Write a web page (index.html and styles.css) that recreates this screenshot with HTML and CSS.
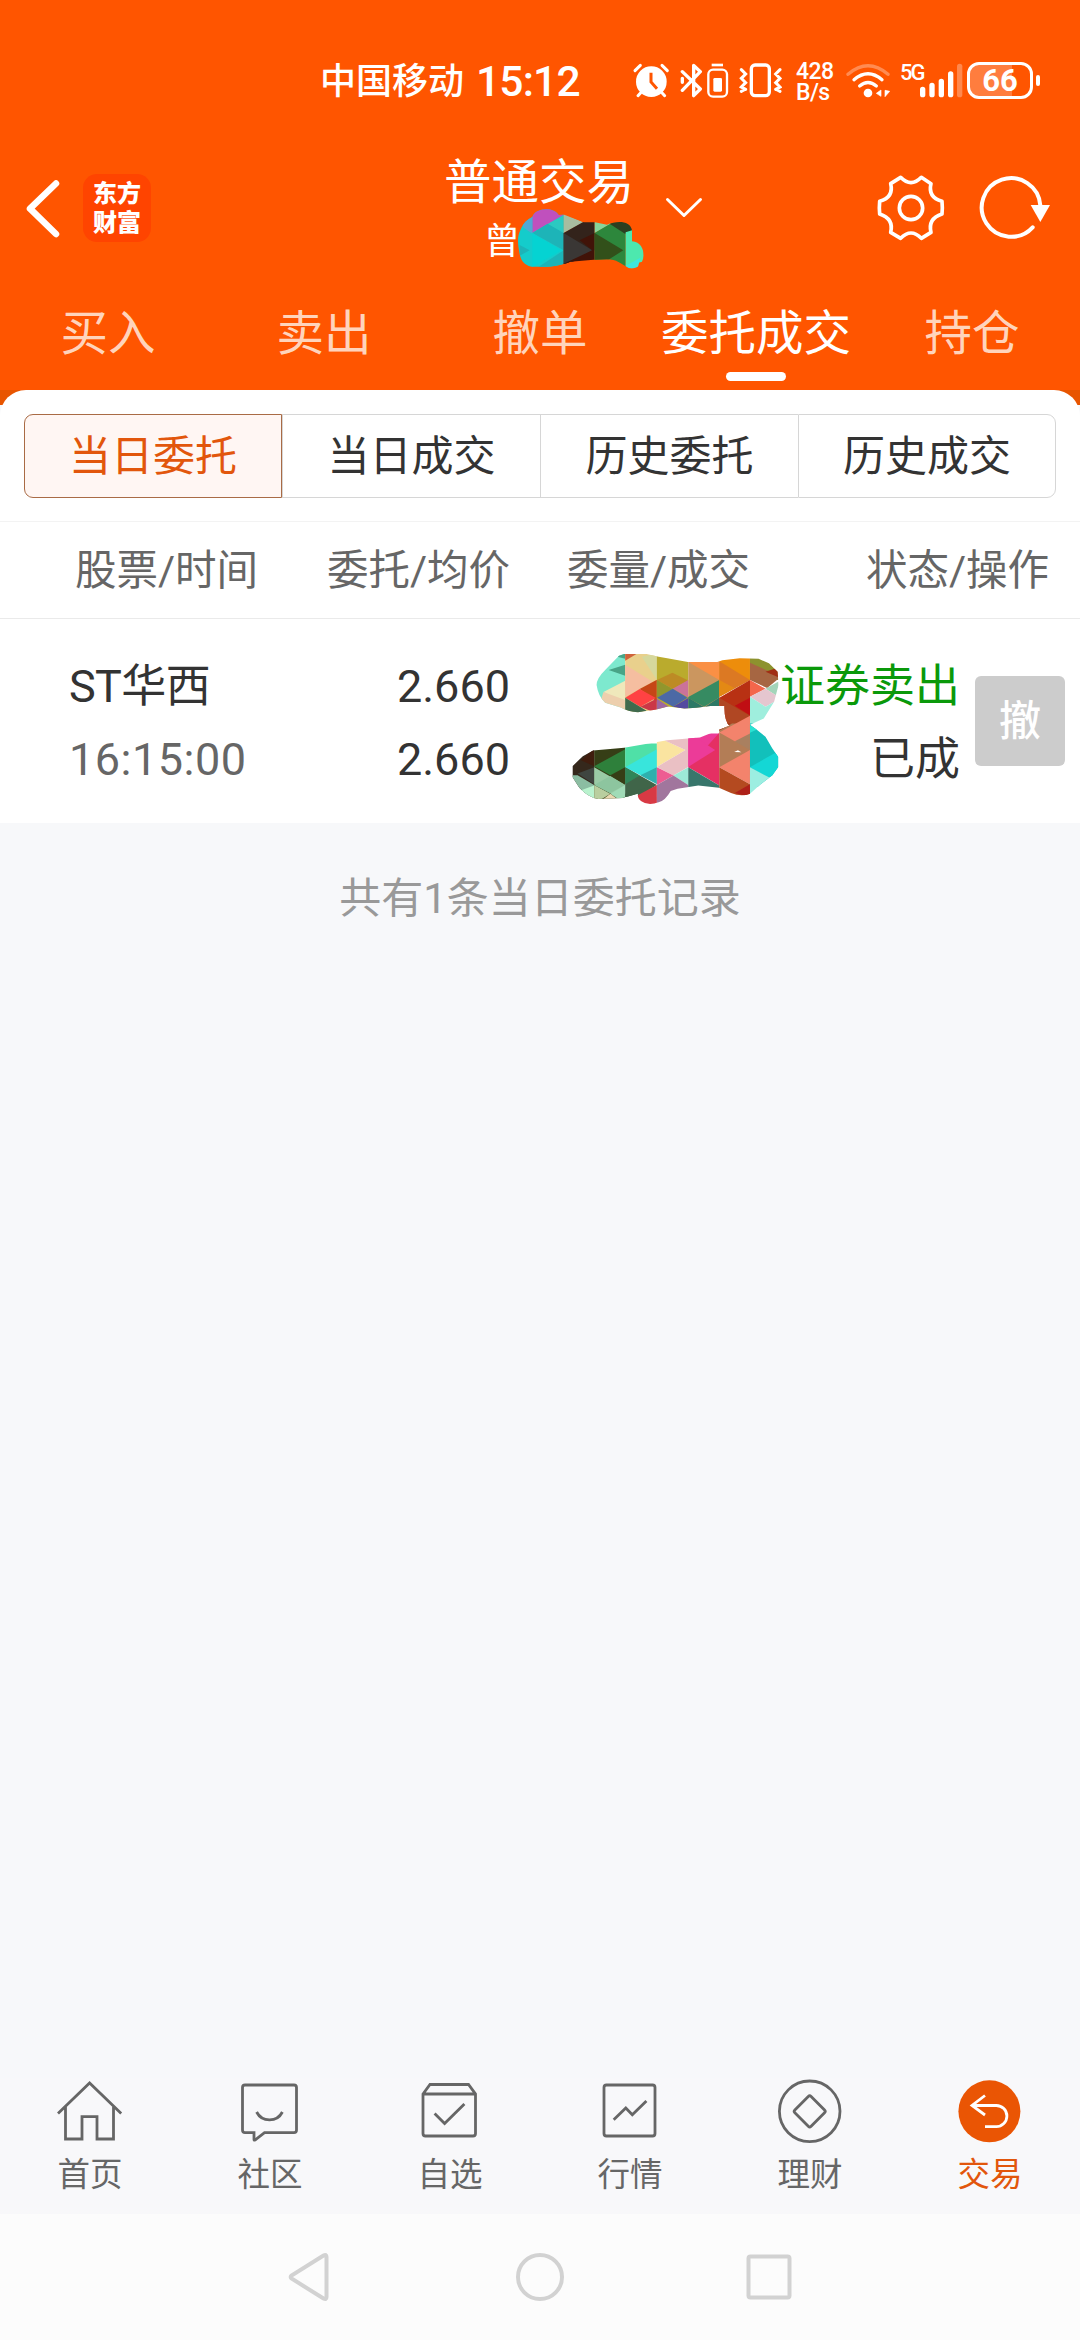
FILE: index.html
```html
<!DOCTYPE html>
<html lang="zh-CN">
<head>
<meta charset="utf-8">
<title>普通交易</title>
<link rel="stylesheet" href="styles.css">
</head>
<body>
<div class="screen">
  <header class="top">
    <div class="status">
      <span class="carrier">中国移动</span>
      <span class="clock">15:12</span>
      <svg class="st-alarm" width="38" height="38" viewBox="33 66 114 114">
        <circle cx="91" cy="125" r="46" fill="#fff"/>
        <path d="M42 92L58 76M139 92L123 76M62 155L51 167M120 155L131 167" stroke="#fff" stroke-width="9" stroke-linecap="round"/>
        <path d="M90 98V126L108 146" fill="none" stroke="#f50" stroke-width="9"/>
      </svg>
      <svg class="st-bt" width="50" height="38" viewBox="177 66 150 114">
        <path d="M184 95L238 147L218 167V76L238 95L184 151M184 115V127" fill="none" stroke="#fff" stroke-width="10" stroke-linecap="round" stroke-linejoin="round"/>
        <rect x="262" y="89" width="56" height="81" rx="14" fill="none" stroke="#fff" stroke-width="7"/>
        <path d="M272 75H306" stroke="#fff" stroke-width="8"/>
        <rect x="277" y="114" width="26" height="41" rx="4" fill="#fff"/>
      </svg>
      <svg class="st-vib" width="43" height="38" viewBox="355 66 129 114">
        <rect x="392" y="75" width="54" height="92" rx="11" fill="none" stroke="#fff" stroke-width="10"/>
        <path d="M362 89L375 102L362 115L375 128L362 141L375 148M362 154L370 150M478 89L465 102L478 115L465 128L478 141L465 148M478 154L470 150" fill="none" stroke="#fff" stroke-width="9" stroke-linecap="round"/>
      </svg>
      <span class="speed"><span>428</span><span>B/s</span></span>
      <svg class="st-wifi" width="46" height="38" viewBox="672 66 138 114">
        <path d="M681 103Q741 52 801 103" fill="none" stroke="#fff" stroke-opacity=".32" stroke-width="10" stroke-linecap="round"/>
        <path d="M699 119Q741 83 783 119M716 138Q741 117 766 138" fill="none" stroke="#fff" stroke-width="10" stroke-linecap="round"/>
        <circle cx="741" cy="159" r="13" fill="#fff"/>
        <path d="M780 150V169L766 160ZM792 151V170L806 154Z" fill="#fff" stroke="#fff" stroke-width="2"/>
      </svg>
      <span class="signal">
        <span class="net">5G</span>
        <svg width="44" height="36" viewBox="862 69 132 108">
          <path d="M873 148V164M901 136V164M929 124V164M957 102V164" stroke="#fff" stroke-width="16" stroke-linecap="round"/>
          <path d="M984 79V164" stroke="#fff" stroke-opacity=".3" stroke-width="16" stroke-linecap="round"/>
        </svg>
      </span>
      <span class="battery"><span class="cell">66</span><i></i></span>
    </div>

    <div class="titlebar">
      <svg class="back" width="36" height="60" viewBox="24 178 36 60"><path d="M56 183.500L30 208.700L56 234" fill="none" stroke="#fff" stroke-width="6.500" stroke-linecap="round" stroke-linejoin="round"/></svg>
      <div class="logo"><span>东方</span><span>财富</span></div>
      <div class="title">
        <div class="t1">普通交易</div>
        <div class="t2">曾</div>
        <svg class="mask-name" width="128" height="64" viewBox="290 200 384 192">
          <clipPath id="a"><path d="M336 230C344 202 400 198 415 224L432 223L490 246H524L560 253C590 240 630 240 635 270V303C660 305 670 325 670 346C666 380 640 388 625 383C600 370 590 357 560 357L520 358L450 364C410 380 370 380 333 379C310 374 301 358 298 340C292 310 290 290 300 270C310 245 322 238 336 230Z"/></clipPath>
          <g clip-path="url(#a)">
            <path fill="#14cccb" d="M290 200H430V392H290Z"/>
            <path fill="#c050bd" d="M336 195H430V224L336 278Z"/>
            <path fill="#51a8d3" d="M290 200H336V280L310 262Z"/>
            <path fill="#2bc9c1" d="M336 278L430 224V330Z"/>
            <path fill="#1db4b8" d="M336 278L382 250L430 278V330ZM430 330V392H336ZM298 314L328 330L298 346Z"/>
            <path fill="#05d3d2" d="M336 278L424 330L336 380Z"/>
            <path fill="#a8bda0" d="M430 220L490 246L430 278Z"/>
            <path fill="#33231b" d="M430 278L490 244H523V330L430 380Z"/>
            <path fill="#3a3735" d="M430 278L516 330L430 380Z"/>
            <path fill="#411308" d="M478 300L523 278V392H430V370L516 330Z"/>
            <path fill="#86d49a" d="M523 240H570V252L523 278Z"/>
            <path fill="#2d873c" d="M523 278L570 250L616 276V392H523Z"/>
            <path fill="#32501a" d="M523 278L609 330L523 384Z"/>
            <path fill="#2c3f20" d="M570 240H640V270L614 280L570 252Z"/>
            <path fill="#4de8ae" d="M616 276L640 268V300L680 300V360L616 378Z"/>
            <path fill="#3de5de" d="M616 376L660 352L650 392H616Z"/>
          </g>
        </svg>
      </div>
      <svg class="chev" width="40" height="24" viewBox="664 195 40 24"><path d="M667.500 198.500L684 214.500L700.500 198.500" fill="none" stroke="#fff" stroke-width="3" stroke-linecap="round" stroke-linejoin="round"/></svg>
      <svg class="gear" width="70" height="68" viewBox="467 102 210 204">
        <path d="M541 112Q572 144 603 112L632 131Q622 172 665 184Q667 204 665 222Q622 236 632 277L603 295Q572 263 541 295L511 277Q521 236 478 222Q476 204 478 184Q521 172 511 131Z" fill="none" stroke="#fff" stroke-width="11" stroke-linejoin="round"/>
        <circle cx="572" cy="204" r="35" fill="none" stroke="#fff" stroke-width="11"/>
      </svg>
      <svg class="refresh" width="74" height="68" viewBox="774 102 222 204">
        <path d="M938 262A88 88 0 1 1 961 196" fill="none" stroke="#fff" stroke-width="12" stroke-linecap="round"/>
        <path d="M932 195H990L961 246Z" fill="#fff"/>
      </svg>
    </div>

    <nav class="tabs">
      <span>买入</span><span>卖出</span><span>撤单</span><span class="on">委托成交</span><span>持仓</span>
    </nav>
  </header>

  <main class="sheet-wrap">
    <section class="sheet">
      <div class="seg"><span class="on">当日委托</span><span>当日成交</span><span>历史委托</span><span>历史成交</span></div>
      <div class="row head"><span>股票/时间</span><span>委托/均价</span><span>委量/成交</span><span>状态/操作</span></div>
      <div class="row order">
        <div class="col name"><span class="stock">ST华西</span><span class="time">16:15:00</span></div>
        <div class="col price"><span>2.660</span><span>2.660</span></div>
        <div class="col state"><span class="sell">证券卖出</span><span>已成</span></div>
        <div class="cancel">撤</div>
        <svg class="mask-qty" width="212" height="157" viewBox="85 60 615 470" preserveAspectRatio="none">
          <clipPath id="b"><path d="M245 72H310L345 80L370 85L430 96H515L530 91L580 85L635 86L665 100L690 125L693 165L680 215L650 265L610 284L628 297L655 320L675 355L692 380V410L675 435L640 463L610 490Q585 500 555 488L520 472L460 466L400 475L380 482Q365 510 345 516Q315 528 295 513Q283 505 285 490L240 503L170 506Q140 500 115 472L95 440V408L125 378L155 361L245 353L320 339L370 330L430 325L465 322L550 287Q535 270 536 228H495L455 233L420 235L372 229L335 239L285 246Q255 244 235 232L190 218Q170 200 165 165Q165 145 190 120L230 77Z"/></clipPath>
          <g clip-path="url(#b)">
            <path fill="#7de9ce" d="M85 60H248V250H85Z"/>
            <path fill="#48a487" d="M248 60V86L225 80ZM200 120L248 104V137Z"/>
            <path fill="#efe8bb" d="M185 186L248 152V220Z"/><path fill="#edcfad" d="M185 186L248 210V250H165Z"/>
            <path fill="#e9d08c" d="M248 60H340V250H248Z"/><path fill="#cf633b" d="M248 60H300L248 92Z"/>
            <path fill="#f5bea0" d="M248 104L328 155L248 200Z"/><path fill="#d6d89c" d="M296 80L340 70V150Z"/>
            <path fill="#c64616" d="M340 149V215L290 177Z"/><path fill="#ff4243" d="M248 203L290 177L337 204L292 230Z"/><path fill="#406b4e" d="M248 203L310 242L248 260Z"/><path fill="#cb3747" d="M292 230L340 205V250Z"/>
            <path fill="#baab2d" d="M340 60H431V250H340Z"/><path fill="#bd8b25" d="M340 150L385 128L431 151L386 176Z"/><path fill="#cb729a" d="M386 176L431 150V202Z"/><path fill="#91962d" d="M340 150L386 177L340 203Z"/>
            <path fill="#4c69a5" d="M340 203L386 176L429 203L387 230Z"/><path fill="#9e67a1" d="M340 206L390 240H340Z"/><path fill="#544aa0" d="M431 204V240L387 230Z"/>
            <path fill="#cb965f" d="M431 60H521V250H431Z"/><path fill="#fa9045" d="M431 96H521V150Z"/><path fill="#368b62" d="M431 201L521 150V202L477 230L431 204Z"/><path fill="#2c7966" d="M431 203L475 230L431 250ZM480 230L521 202V250Z"/>
            <path fill="#ed8d0b" d="M521 60H610V150L521 200Z"/><path fill="#dc7923" d="M521 94L610 150L521 200Z"/><path fill="#e38914" d="M521 150L565 174L521 200Z"/>
            <path fill="#b83113" d="M521 203L610 150V285H521Z"/><path fill="#c00e13" d="M566 227L610 203V255Z"/><path fill="#b04723" d="M521 203L610 257L540 300H521Z"/>
            <path fill="#8d922e" d="M610 60H700V150H610Z"/><path fill="#a66642" d="M610 98L700 140L660 174L610 150Z"/><path fill="#a02e14" d="M655 125L700 110V145Z"/>
            <path fill="#f4664b" d="M610 150L655 176L610 200Z"/><path fill="#a4d5ba" d="M655 176L700 150V205Z"/><path fill="#e5c6cf" d="M610 200L655 176L700 204L655 230Z"/><path fill="#9feedd" d="M610 200L655 230L700 204V285H610Z"/>
            <path fill="#35281c" d="M85 340H158V520H85Z"/><path fill="#401d0e" d="M120 390L158 355V408Z"/><path fill="#3f4540" d="M110 430L158 411V462Z"/><path fill="#8bbda2" d="M85 435H110L158 464V520H85Z"/><path fill="#b9f2ce" d="M120 480L158 466V520Z"/>
            <path fill="#363e16" d="M158 340H248V520H158Z"/><path fill="#2e803b" d="M158 408L248 357V411L205 435Z"/><path fill="#9acba6" d="M158 411L248 464V490L210 492L158 462Z"/><path fill="#b9ce9f" d="M158 464L205 490L158 520Z"/><path fill="#8dc59f" d="M158 464L205 437L248 464L204 488Z"/><path fill="#a0dbb7" d="M205 490L248 464V520Z"/><path fill="#e9d8b1" d="M180 510L205 490L230 510Z"/>
            <path fill="#4fe0a7" d="M248 340H340V411H248Z"/><path fill="#38e5dc" d="M248 411L340 357V411L320 450Z"/><path fill="#2fb0ad" d="M292 435L340 411V462Z"/><path fill="#406549" d="M248 411L340 464L260 500H248Z"/><path fill="#308558" d="M248 411L290 436L248 462Z"/><path fill="#406549" d="M248 490L340 464L285 500H248Z"/><path fill="#d83944" d="M275 500L340 464V530H275Z"/>
            <path fill="#fae4a0" d="M340 320L423 359L340 410Z"/><path fill="#eac0c4" d="M361 330L431 310V410L388 436L340 410L423 359Z"/><path fill="#ed5c92" d="M340 411L388 436L340 464Z"/><path fill="#9dead7" d="M388 436L431 411V464Z"/><path fill="#a1769d" d="M340 464L388 436L431 464V490L340 530Z"/>
            <path fill="#ec3b98" d="M431 310H521V450L431 410Z"/><path fill="#e53063" d="M431 411L521 308V466L475 437Z"/><path fill="#ec3b98" d="M431 308L509 359L431 410Z"/><path fill="#38766b" d="M431 411L521 466V480H431Z"/>
            <path fill="#b37d56" d="M521 280H610V410H521Z"/><path fill="#f3836c" d="M521 307L610 257V333L566 333ZM521 411L610 359V462Z"/><path fill="#a33d1d" d="M520 302L558 280L521 275Z"/><path fill="#b44a20" d="M521 411L610 462V500H521Z"/><path fill="#ae2019" d="M566 488L610 462V500Z"/>
            <path fill="#12c0bb" d="M610 280H700V470H610Z"/><path fill="#2be2d2" d="M610 285L632 297L610 308Z"/><path fill="#14d7d5" d="M610 411L693 362V440L660 440Z"/><path fill="#9ceee1" d="M610 411L672 445L610 500Z"/><path fill="#a98060" d="M610 310V359L566 333Z"/>
            <path fill="#fff" d="M564 365L575 360L585 366Z"/>
          </g>
        </svg>
      </div>
    </section>
    <p class="total">共有1条当日委托记录</p>
  </main>

  <footer class="nav">
    <div><svg viewBox="-36 0 72 68"><path d="M-32 35.500L-.4 5L31.200 35.500M-24.500 29V61H-8V38.700H7V61H23.500V29"/></svg><span>首页</span></div>
    <div><svg viewBox="-36 0 72 68"><path d="M-25 7H24Q26.500 7 26.500 9.500V52Q26.500 54.700 24 54.700H-5.500L-15 62Q-16 62.500-16 61.500V54.700H-25Q-27.500 54.700-27.500 52V9.500Q-27.500 7-25 7ZM-13.400 34C-8 44.500 7 44.500 12.400 34"/></svg><span>社区</span></div>
    <div><svg viewBox="-36 0 72 68"><path d="M-27 16L-20 6.500H18.500L25.500 16V55.500Q25.500 58 23 58H-24.500Q-27 58-27 55.500ZM-27 16H25.500M-15.400 35.500L-5.400 45.500L14.400 26"/></svg><span>自选</span></div>
    <div><svg viewBox="-36 0 72 68"><rect x="-26" y="7" width="51" height="51" rx="2.500"/><path d="M-16.300 41.700L-4.200 30L2.300 36.700L16.400 23"/></svg><span>行情</span></div>
    <div><svg viewBox="-36 0 72 68"><circle cx="-.3" cy="33.300" r="30.300"/><rect x="-11.500" y="-11.500" width="23" height="23" rx="2" transform="translate(-.3 33.400) rotate(45)"/></svg><span>理财</span></div>
    <div class="on"><svg viewBox="-36 0 72 68"><circle cx="-.6" cy="33.300" r="31" fill="#ea5504" stroke="none"/><path stroke="#fff" d="M-5 17.500L-18 27.500L-5 37M-18 27.500H6.300A10.600 10.600 0 0 1 6.300 48.700H-5"/></svg><span>交易</span></div>
  </footer>
  <div class="sysnav">
    <svg viewBox="-24 -26 48 52"><path d="M16.500-20V20Q16.500 23 13.500 21.500L-18.500 1.500Q-20 0-18.500-1.500L13.500-21.500Q16.500-23 16.500-20Z"/></svg>
    <svg viewBox="-24 -26 48 52"><circle cx="0" cy="0" r="22"/></svg>
    <svg viewBox="-24 -26 48 52"><rect x="-21.500" y="-20.500" width="41" height="41" rx="2"/></svg>
  </div>
</div>
</body>
</html>
```

FILE: styles.css
```css
* { box-sizing: border-box; }
body { margin: 0; font-family: Roboto, "Noto Sans CJK SC", sans-serif; color: #333; }
svg { display: block; flex: none; }
.screen { width: 1080px; height: 2340px; display: flex; flex-direction: column; background: #f7f8fa; }

.top { height: 390px; background: #f50; color: #fff; display: flex; flex-direction: column; }
.status { height: 140px; padding: 42px 0 0 320px; display: flex; align-items: flex-start; line-height: 40px; }
.carrier { font-size: 36px; font-weight: 500; width: 156px; padding-top: 1px; }
.clock { font-size: 42.5px; font-weight: 500; letter-spacing: -.8px; width: 156px; line-height: 42px; }
.status svg { margin-top: 20px; }
.status .st-alarm { margin: 20px 10px 0 0; }
.status .st-bt { margin-right: 9px; }
.status .st-vib { margin-right: 14px; }
.speed { width: 49px; font-size: 23px; line-height: 21px; font-weight: 500; letter-spacing: -.6px; display: flex; flex-direction: column; padding-top: 19px; }
.status .st-wifi { margin-right: 10px; }
.signal { position: relative; width: 62px; display: flex; justify-content: flex-end; }
.signal svg { margin-top: 21px; }
.net { position: absolute; left: -1px; top: 20px; font-size: 22px; line-height: 22px; font-weight: 500; letter-spacing: -2px; }
.battery { display: flex; align-items: center; padding-top: 20px; margin-left: 4px; gap: 3px; }
.battery .cell { width: 66px; height: 37px; border: 3px solid #fff; border-radius: 12px; font-size: 31px; font-weight: 700; line-height: 32px; text-align: center; background: linear-gradient(90deg, #ff7d3e 70%, transparent 70%); }
.battery i { width: 4px; height: 11px; background: #fff; border-radius: 2px; }
.carrier, .clock { margin-top: 19px; }

.titlebar { height: 136px; display: flex; align-items: center; padding-left: 24px; }
.logo { width: 68px; height: 68px; margin-left: 23px; border-radius: 14px; background: #f40; display: flex; flex-direction: column; align-items: center; justify-content: center; font: 900 24px/29px "Noto Sans CJK SC", sans-serif; padding-bottom: 4px; }
.title { position: relative; width: 190px; height: 136px; margin-left: 293px; padding-top: 17px; }
.t1 { font-size: 47.5px; line-height: 52px; white-space: nowrap; }
.t2 { font-size: 36px; line-height: 40px; padding: 13px 0 0 40px; }
.mask-name { position: absolute; left: 73px; top: 67px; }
.chev { margin-left: 30px; }
.gear { margin-left: 172px; }
.refresh { margin-left: 32px; }

.tabs { height: 114px; display: grid; grid-template-columns: repeat(5, 216px); text-align: center; font-size: 47.5px; line-height: 70px; padding-top: 23px; color: #ffd4bc; }
.tabs .on { color: #fff; }
.tabs .on::after { content: ""; display: block; width: 60px; height: 9px; margin: 3px auto 0; border-radius: 5px; background: #fff; }

.sheet-wrap { flex: 1; background: linear-gradient(#e85500 15px, transparent 15px); }
.sheet { background: #fff; border-radius: 26px 26px 0 0; padding-top: 24px; }
.seg { margin: 0 24px; height: 84px; display: grid; grid-template-columns: repeat(4, 1fr); font-size: 42px; text-align: center; }
.seg span { border: 1px solid #d6d6d6; border-right-width: 0; padding-top: 2px; line-height: 80px; }
.seg span:last-child { border-right-width: 1px; border-radius: 0 9px 9px 0; }
.seg .on { color: #e2560c; background: #fff6f3; border: 1px solid #a96b45; border-radius: 9px 0 0 9px; }
.head { margin-top: 23px; height: 98px; border-top: 1px solid #f3f3f3; border-bottom: 1px solid #eaeaea; display: grid; grid-template-columns: 258px 252px 240px 299px; padding-right: 31px; font-size: 41.5px; line-height: 98px; color: #666; text-align: right; }
.order { position: relative; height: 204px; display: grid; grid-template-columns: 440px 70px 450px 105px; align-items: start; font-size: 45px; line-height: 73px; padding-top: 31px; }
.col { display: flex; flex-direction: column; }
.name { padding-left: 69px; }
.stock { letter-spacing: -.6px; }
.time { color: #666; letter-spacing: .5px; }
.price, .state { align-items: flex-end; }
.sell { color: #0a990a; }
.cancel { width: 90px; height: 90px; margin: 26px 0 0 15px; border-radius: 6px; background: #ccc; color: #fff; font-size: 42px; font-weight: 500; line-height: 92px; text-align: center; }
.mask-qty { position: absolute; left: 569px; top: 31px; }
.total { margin: 46px 0 0; text-align: center; font-size: 42px; line-height: 60px; color: #999; }

.nav { height: 136px; background: #f8f8fa; display: grid; grid-template-columns: repeat(6, 180px); font-size: 32.5px; line-height: 44px; color: #666; }
.nav div { display: flex; flex-direction: column; align-items: center; }
.nav svg { width: 72px; height: 68px; fill: none; stroke: #666; stroke-width: 2.8; }
.nav span { margin-top: 7px; }
.nav .on { color: #e2560c; }
.sysnav { height: 126px; background: #fcfcfc; display: flex; justify-content: center; align-items: center; gap: 182px; }
.sysnav svg { width: 48px; height: 52px; fill: none; stroke: #d2d2d2; stroke-width: 4; }
```
